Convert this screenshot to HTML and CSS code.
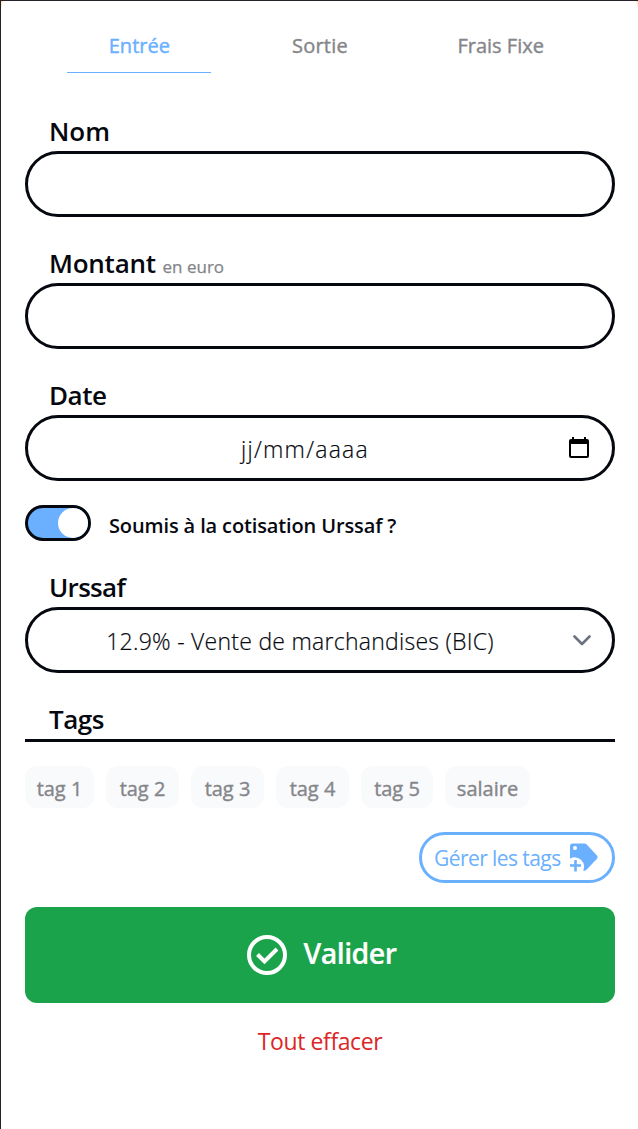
FILE: index.html
```html
<!DOCTYPE html>
<html lang="fr">
<head>
<meta charset="utf-8">
<title>Nouvelle entrée</title>
<link rel="stylesheet" href="styles.css">
</head>
<body>
<main class="sheet">
  <nav class="tabs">
    <a class="tab tab-active">Entrée</a>
    <a class="tab tab-wide">Sortie</a>
    <a class="tab">Frais Fixe</a>
  </nav>
  <form class="form">
    <div class="field">
      <label class="label">Nom</label>
      <div class="control"></div>
    </div>
    <div class="field">
      <label class="label"><span class="l-montant">Montant</span> <small class="hint">en euro</small></label>
      <div class="control"></div>
    </div>
    <div class="field">
      <label class="label l-date">Date</label>
      <div class="control">
        <span class="value date">jj/mm/aaaa</span>
        <svg class="calendar" viewBox="0 0 20 22"><path fill-rule="evenodd" d="M3 0h2v2h10V0h2v2h1a2 2 0 0 1 2 2v15a2 2 0 0 1-2 2H2a2 2 0 0 1-2-2V4a2 2 0 0 1 2-2h1zM2 7v12h16V7z"/></svg>
      </div>
    </div>
    <div class="switch-row">
      <span class="switch"><span class="knob"></span></span>
      <span class="switch-label">Soumis à la cotisation Urssaf ?</span>
    </div>
    <div class="field">
      <label class="label l-urssaf">Urssaf</label>
      <div class="control">
        <span class="value select">12.9% - Vente de marchandises (BIC)</span>
        <svg class="chevron" viewBox="0 0 18 11"><path d="M1.500 1.500 9 9l7.500-7.500"/></svg>
      </div>
    </div>
    <div class="tags-head"><span class="label l-tags">Tags</span></div>
    <div class="tags">
      <span class="tag first">tag 1</span>
      <span class="tag">tag 2</span>
      <span class="tag">tag 3</span>
      <span class="tag">tag 4</span>
      <span class="tag fifth">tag 5</span>
      <span class="tag last">salaire</span>
    </div>
    <button type="button" class="manage">
      <span class="manage-text">Gérer les tags</span>
      <svg class="tag-icon" viewBox="0 0 28 29"><path fill-rule="evenodd" d="M2.500.500H14.500a3 3 0 0 1 2.200.9L27 12.500q1.200 1.600 0 3.200L16.500 26.800q-1.500 1.300-3.300.7A9.300 9.300 0 0 0 0 15.700V3A2.500 2.500 0 0 1 2.500.500zM5 3a2 2 0 1 0 0 4 2 2 0 0 0 0-4z"/><path d="M4.200 17h2.600v4.200H11v2.600H6.800V28.500H4.200v-4.700H0v-2.600h4.200z"/></svg>
    </button>
    <button type="button" class="submit">
      <svg class="check" viewBox="0 0 40 40"><circle cx="20" cy="20" r="18"/><path d="m10.500 19.500 7 7 12.500-12.500"/></svg>
      <span class="submit-text">Valider</span>
    </button>
    <button type="button" class="clear">Tout effacer</button>
  </form>
</main>
</body>
</html>
```
FILE: styles.css
```css
* { box-sizing: border-box; }
body {
  margin: 0;
  height: 1129px;
  overflow: hidden;
  background: #ffe3bd;
  border-top: 1px solid #242228;
  border-left: 1px solid #242228;
  font-family: "Open Sans", "Noto Sans", sans-serif;
  color: #060810;
}
.sheet {
  height: 1128px;
  padding: 19px 23px 0 24px;
  background: #fff;
  border-radius: 3px 3px 0 0 / 9px 9px 0 0;
}
.tabs {
  display: grid;
  grid-template-columns: repeat(3, 1fr);
  padding: 0 24px;
}
.tab {
  width: 144px;
  height: 53px;
  margin: 0 auto;
  border-bottom: 1px solid transparent;
  text-align: center;
  font-size: 20px;
  line-height: 51px;
  -webkit-text-stroke: 0.4px currentColor;
  color: #85868a;
}
.tab-wide { letter-spacing: 0.25px; }
.tab-active { color: #6ab0ff; border-color: #6ab0ff; }
.form { display: flex; flex-direction: column; gap: 24px; padding-top: 36px; }
.label {
  display: block;
  height: 42px;
  padding-left: 24px;
  font-size: 26px;
  line-height: 45px;
  font-weight: 600;
}
.l-montant { letter-spacing: -0.25px; }
.l-date, .l-tags { letter-spacing: -0.5px; }
.l-urssaf { letter-spacing: -0.7px; }
.hint { font-size: 17px; font-weight: 400; -webkit-text-stroke: 0.25px currentColor; color: #85868a; }
.control {
  display: flex;
  align-items: center;
  height: 66px;
  padding: 0 22px;
  border: 3px solid #060810;
  border-radius: 33px;
}
.value {
  flex: 1;
  text-align: center;
  font-size: 23px;
  font-weight: 300;
  line-height: 60px;
  padding-top: 2px;
  -webkit-text-stroke: 0.2px currentColor;
}
.date { padding-right: 9px; letter-spacing: 1.25px; }
.select { padding-right: 23px; letter-spacing: 0.26px; white-space: nowrap; }
.calendar { width: 20px; height: 22px; margin-right: 1px; }
.chevron { width: 18px; height: 11px; margin-right: -1px; fill: none; stroke: #6b7280; stroke-width: 2.6; stroke-linecap: round; stroke-linejoin: round; }
.switch-row { display: flex; align-items: center; gap: 18px; height: 36px; }
.switch {
  display: flex;
  justify-content: flex-end;
  width: 66px;
  height: 36px;
  border: 3px solid #060810;
  border-radius: 18px;
  background: #6ab0ff;
}
.knob { width: 30px; height: 30px; border-radius: 50%; background: #fff; }
.switch-label { font-size: 20px; font-weight: 600; letter-spacing: -0.13px; line-height: 36px; padding-top: 6px; }
.tags-head { height: 45px; border-bottom: 3px solid #060810; }
.tags { display: flex; gap: 12px; height: 42px; }
.tag {
  width: 73px;
  border-radius: 12px;
  background: #f9fafc;
  color: #85868a;
  text-align: center;
  font-size: 20px;
  line-height: 45px;
  white-space: nowrap;
  -webkit-text-stroke: 0.4px currentColor;
}
.first { width: 69px; }
.fifth { width: 72px; }
.last { width: 85px; }
button { font-family: inherit; margin: 0; padding: 0; background: none; border: 0; }
.manage {
  display: flex;
  align-items: center;
  align-self: flex-end;
  justify-content: space-between;
  width: 196px;
  height: 51px;
  padding: 0 14px 0 12px;
  border: 3px solid #6ab0ff;
  border-radius: 26px;
  color: #6ab0ff;
  font-size: 21px;
  letter-spacing: -0.57px;
  white-space: nowrap;
}
.manage-text { padding-top: 1px; }
.tag-icon { width: 28px; height: 29px; fill: #6ab0ff; }
.submit {
  display: flex;
  align-items: center;
  justify-content: center;
  gap: 16px;
  height: 96px;
  padding-left: 4px;
  border-radius: 12px;
  background: #1aa34a;
  color: #fff;
  font-size: 28.5px;
  font-weight: 600;
  letter-spacing: -0.5px;
  -webkit-text-stroke: 0.2px currentColor;
}
.submit-text { padding-bottom: 4px; }
.check { width: 40px; height: 40px; fill: none; stroke: #fff; stroke-width: 4; }
.clear { align-self: center; height: 28px; font-size: 23px; line-height: 26px; letter-spacing: -0.4px; color: #dc2626; }
```
